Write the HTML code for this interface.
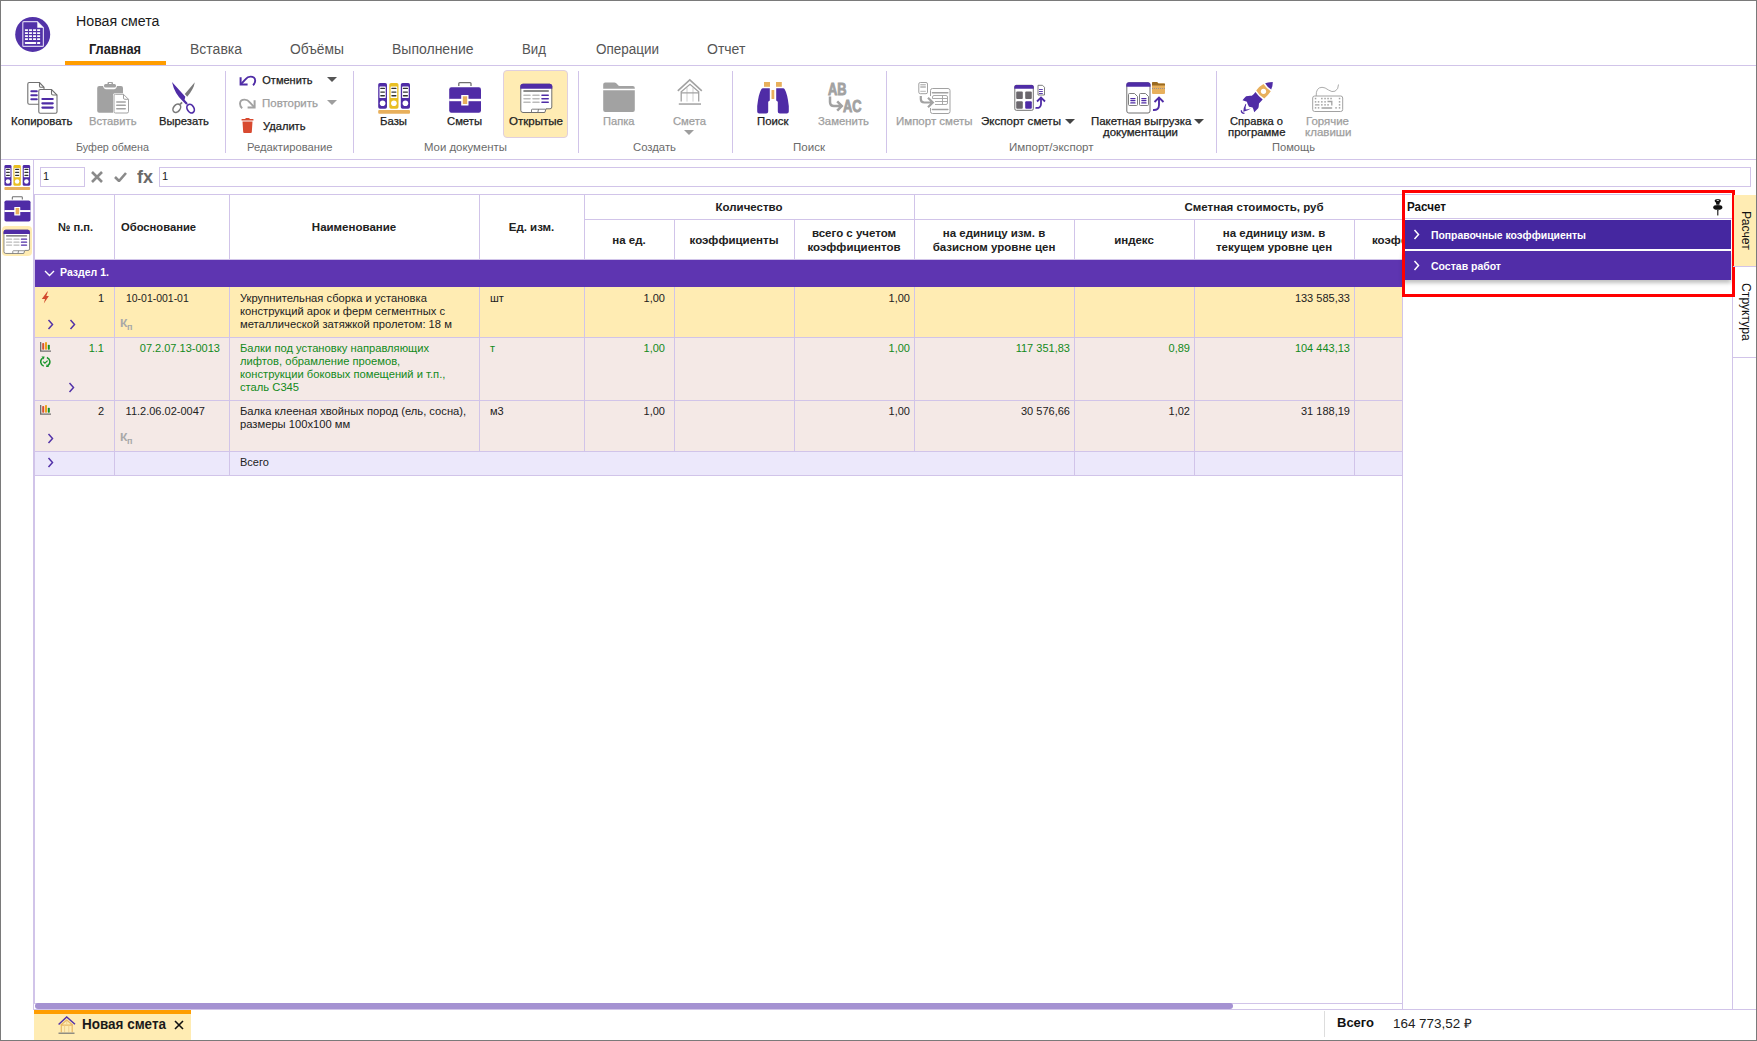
<!DOCTYPE html>
<html><head><meta charset="utf-8"><style>
html,body{margin:0;padding:0;}
body{width:1757px;height:1041px;overflow:hidden;position:relative;background:#fff;font-family:"Liberation Sans",sans-serif;}
.t{position:absolute;white-space:nowrap;line-height:1;transform-origin:0 0;}
.r{position:absolute;display:block;}
#frame{position:absolute;left:0;top:0;width:1757px;height:1041px;box-sizing:border-box;border:1px solid #7a7a7a;pointer-events:none;}
</style></head><body>
<div class="r" style="left:0px;top:0px;width:1757px;height:1041px;background:#fff;"></div>
<svg class="r" style="left:15px;top:16px" width="36" height="36" viewBox="0 0 36 36"><circle cx="17.7" cy="18.4" r="17.5" fill="#5232a8"/><path d="M8.8 5.7H22.3L28.4 11.8V29.4Q28.4 30.4 27.4 30.4H8.8Q7.8 30.4 7.8 29.4V6.7Q7.8 5.7 8.8 5.7Z" fill="none" stroke="#d6cdee" stroke-width="1.2"/><path d="M22.3 5.7V11.8H28.4Z" fill="#fff"/><rect x="9.9" y="13.2" width="3.1" height="1.7" rx="0.4" fill="#fff"/><rect x="13.95" y="13.2" width="3.1" height="1.7" rx="0.4" fill="#fff"/><rect x="18.0" y="13.2" width="3.1" height="1.7" rx="0.4" fill="#fff"/><rect x="22.049999999999997" y="13.2" width="3.1" height="1.7" rx="0.4" fill="#fff"/><rect x="9.9" y="16.2" width="3.1" height="1.7" rx="0.4" fill="#fff"/><rect x="13.95" y="16.2" width="3.1" height="1.7" rx="0.4" fill="#fff"/><rect x="18.0" y="16.2" width="3.1" height="1.7" rx="0.4" fill="#fff"/><rect x="22.049999999999997" y="16.2" width="3.1" height="1.7" rx="0.4" fill="#fff"/><rect x="9.9" y="19.2" width="3.1" height="1.7" rx="0.4" fill="#fff"/><rect x="13.95" y="19.2" width="3.1" height="1.7" rx="0.4" fill="#fff"/><rect x="18.0" y="19.2" width="3.1" height="1.7" rx="0.4" fill="#fff"/><rect x="22.049999999999997" y="19.2" width="3.1" height="1.7" rx="0.4" fill="#fff"/><rect x="9.9" y="22.2" width="3.1" height="1.7" rx="0.4" fill="#fff"/><rect x="13.95" y="22.2" width="3.1" height="1.7" rx="0.4" fill="#fff"/><rect x="18.0" y="22.2" width="3.1" height="1.7" rx="0.4" fill="#fff"/><rect x="22.049999999999997" y="22.2" width="3.1" height="1.7" rx="0.4" fill="#fff"/><rect x="9.9" y="26.1" width="11.2" height="1.9" rx="0.4" fill="#fff"/><rect x="22.05" y="26.1" width="3.1" height="1.9" rx="0.4" fill="#fff"/></svg>
<div class="t" style="left:75.5px;top:14.10px;font-size:14px;color:#1a1a1a;transform:scaleX(1.013);">Новая смета</div>
<div class="t" style="left:89px;top:42.10px;font-size:14px;color:#212121;font-weight:bold;transform:scaleX(0.914);">Главная</div>
<div class="t" style="left:190px;top:42.10px;font-size:14px;color:#555;">Вставка</div>
<div class="t" style="left:290px;top:42.10px;font-size:14px;color:#555;transform:scaleX(0.988);">Объёмы</div>
<div class="t" style="left:392px;top:42.10px;font-size:14px;color:#555;">Выполнение</div>
<div class="t" style="left:522px;top:42.10px;font-size:14px;color:#555;transform:scaleX(0.947);">Вид</div>
<div class="t" style="left:596px;top:42.10px;font-size:14px;color:#555;transform:scaleX(0.962);">Операции</div>
<div class="t" style="left:707px;top:42.10px;font-size:14px;color:#555;">Отчет</div>
<div class="r" style="left:65px;top:61px;width:101px;height:4px;background:#ff9d00;"></div>
<div class="r" style="left:1px;top:65px;width:1755px;height:1px;background:#d1c4e9;"></div>
<div class="r" style="left:225px;top:71px;width:1px;height:82px;background:#d1c4e9;"></div>
<div class="r" style="left:353px;top:71px;width:1px;height:82px;background:#d1c4e9;"></div>
<div class="r" style="left:578px;top:71px;width:1px;height:82px;background:#d1c4e9;"></div>
<div class="r" style="left:732px;top:71px;width:1px;height:82px;background:#d1c4e9;"></div>
<div class="r" style="left:886px;top:71px;width:1px;height:82px;background:#d1c4e9;"></div>
<div class="r" style="left:1216px;top:71px;width:1px;height:82px;background:#d1c4e9;"></div>
<div class="t" style="left:76px;top:141.65px;font-size:11px;color:#6b6b6b;transform:scaleX(0.976);">Буфер обмена</div>
<div class="t" style="left:246.5px;top:141.65px;font-size:11px;color:#6b6b6b;transform:scaleX(1.020);">Редактирование</div>
<div class="t" style="left:424px;top:141.65px;font-size:11px;color:#6b6b6b;transform:scaleX(1.035);">Мои документы</div>
<div class="t" style="left:633px;top:141.65px;font-size:11px;color:#6b6b6b;transform:scaleX(1.028);">Создать</div>
<div class="t" style="left:793px;top:141.65px;font-size:11px;color:#6b6b6b;transform:scaleX(1.050);">Поиск</div>
<div class="t" style="left:1008.5px;top:141.65px;font-size:11px;color:#6b6b6b;transform:scaleX(1.049);">Импорт/экспорт</div>
<div class="t" style="left:1271.5px;top:141.65px;font-size:11px;color:#6b6b6b;transform:scaleX(1.012);">Помощь</div>
<div class="r" style="left:503px;top:70px;width:65px;height:68px;background:#ffecb3;border-radius:4px;box-sizing:border-box;border:1px solid #dfcfe0;"></div>
<div class="t" style="left:10.5px;top:115.65px;font-size:11px;color:#212121;transform:scaleX(1.038);-webkit-text-stroke:0.25px #212121;">Копировать</div>
<div class="t" style="left:88.5px;top:115.65px;font-size:11px;color:#9e9e9e;transform:scaleX(1.019);-webkit-text-stroke:0.25px #9e9e9e;">Вставить</div>
<div class="t" style="left:158.5px;top:115.65px;font-size:11px;color:#212121;transform:scaleX(1.021);-webkit-text-stroke:0.25px #212121;">Вырезать</div>
<div class="t" style="left:380px;top:115.65px;font-size:11px;color:#212121;transform:scaleX(1.032);-webkit-text-stroke:0.25px #212121;">Базы</div>
<div class="t" style="left:447px;top:115.65px;font-size:11px;color:#212121;transform:scaleX(1.023);-webkit-text-stroke:0.25px #212121;">Сметы</div>
<div class="t" style="left:508.5px;top:115.65px;font-size:11px;color:#212121;transform:scaleX(1.049);-webkit-text-stroke:0.25px #212121;">Открытые</div>
<div class="t" style="left:602.5px;top:115.65px;font-size:11px;color:#9e9e9e;transform:scaleX(1.011);-webkit-text-stroke:0.25px #9e9e9e;">Папка</div>
<div class="t" style="left:673px;top:115.65px;font-size:11px;color:#9e9e9e;transform:scaleX(1.022);-webkit-text-stroke:0.25px #9e9e9e;">Смета</div>
<div class="t" style="left:756.5px;top:115.65px;font-size:11px;color:#212121;transform:scaleX(1.033);-webkit-text-stroke:0.25px #212121;">Поиск</div>
<div class="t" style="left:818px;top:115.65px;font-size:11px;color:#9e9e9e;transform:scaleX(1.032);-webkit-text-stroke:0.25px #9e9e9e;">Заменить</div>
<div class="t" style="left:895.5px;top:115.65px;font-size:11px;color:#9e9e9e;transform:scaleX(1.044);-webkit-text-stroke:0.25px #9e9e9e;">Импорт сметы</div>
<div class="t" style="left:981px;top:115.65px;font-size:11px;color:#212121;transform:scaleX(1.050);-webkit-text-stroke:0.25px #212121;">Экспорт сметы</div>
<div class="t" style="left:1090.5px;top:115.65px;font-size:11px;color:#212121;transform:scaleX(1.042);-webkit-text-stroke:0.25px #212121;">Пакетная выгрузка</div>
<div class="t" style="left:1103px;top:126.65px;font-size:11px;color:#212121;transform:scaleX(1.038);-webkit-text-stroke:0.25px #212121;">документации</div>
<div class="t" style="left:1230px;top:115.65px;font-size:11px;color:#212121;transform:scaleX(1.013);-webkit-text-stroke:0.25px #212121;">Справка о</div>
<div class="t" style="left:1227.5px;top:126.65px;font-size:11px;color:#212121;transform:scaleX(1.032);-webkit-text-stroke:0.25px #212121;">программе</div>
<div class="t" style="left:1306px;top:115.65px;font-size:11px;color:#9e9e9e;transform:scaleX(1.041);-webkit-text-stroke:0.25px #9e9e9e;">Горячие</div>
<div class="t" style="left:1304.5px;top:126.65px;font-size:11px;color:#9e9e9e;transform:scaleX(1.046);-webkit-text-stroke:0.25px #9e9e9e;">клавиши</div>
<div class="t" style="left:262.3px;top:74.65px;font-size:11px;color:#212121;-webkit-text-stroke:0.25px #212121;">Отменить</div>
<div class="t" style="left:262px;top:97.65px;font-size:11px;color:#9e9e9e;transform:scaleX(1.043);-webkit-text-stroke:0.25px #9e9e9e;">Повторить</div>
<div class="t" style="left:262.5px;top:120.65px;font-size:11px;color:#212121;transform:scaleX(1.012);-webkit-text-stroke:0.25px #212121;">Удалить</div>
<svg class="r" style="left:327px;top:77px" width="10" height="5" viewBox="0 0 10 5"><path d="M0 0H10L5.0 5z" fill="#555"/></svg>
<svg class="r" style="left:327px;top:100px" width="10" height="5" viewBox="0 0 10 5"><path d="M0 0H10L5.0 5z" fill="#9e9e9e"/></svg>
<svg class="r" style="left:684px;top:130px" width="10" height="5" viewBox="0 0 10 5"><path d="M0 0H10L5.0 5z" fill="#9e9e9e"/></svg>
<svg class="r" style="left:1065px;top:119px" width="10" height="5" viewBox="0 0 10 5"><path d="M0 0H10L5.0 5z" fill="#444"/></svg>
<svg class="r" style="left:1194px;top:119px" width="10" height="5" viewBox="0 0 10 5"><path d="M0 0H10L5.0 5z" fill="#444"/></svg>
<svg class="r" style="left:22px;top:78px" width="40.00" height="40.00" viewBox="0 0 40 40"><path d="M5.8 6Q5.8 4.5 7.3 4.5H17.5L22 9.3V24.8Q22 26.3 20.5 26.3H7.3Q5.8 26.3 5.8 24.8Z" fill="#fff" stroke="#707070" stroke-width="1.1"/><path d="M17.5 4.5V8Q17.5 9.3 18.8 9.3H22" fill="none" stroke="#707070" stroke-width="1.1"/><rect x="8.3" y="12.2" width="7.5" height="2" rx="1" fill="#4f2ca6"/><rect x="8.3" y="16.2" width="7.5" height="2" rx="1" fill="#4f2ca6"/><rect x="8.3" y="20.2" width="7.5" height="2" rx="1" fill="#4f2ca6"/><path d="M16.8 13Q16.8 11.5 18.3 11.5H29.5L35 17V33.8Q35 35.3 33.5 35.3H18.3Q16.8 35.3 16.8 33.8Z" fill="#fff" stroke="#707070" stroke-width="1.1"/><path d="M29.5 11.5V15.5Q29.5 17 31 17H35" fill="none" stroke="#707070" stroke-width="1.1"/><rect x="19.3" y="19.9" width="12.5" height="2.2" rx="1.1" fill="#4f2ca6"/><rect x="19.3" y="24.2" width="12.5" height="2.2" rx="1.1" fill="#4f2ca6"/><rect x="19.3" y="28.5" width="12.5" height="2.2" rx="1.1" fill="#4f2ca6"/></svg>
<svg class="r" style="left:92px;top:78px" width="40.00" height="40.00" viewBox="0 0 40 40"><path d="M7.2 8H11Q12 11.3 14 11.3H22Q24 11.3 25 8H29Q31 8 31 10V32.8Q31 34.8 29 34.8H7.2Q5.2 34.8 5.2 32.8V10Q5.2 8 7.2 8Z" fill="#a2a2a2"/><rect x="12" y="6" width="12" height="3.6" rx="1.5" fill="#a2a2a2"/><rect x="15.5" y="4" width="5.5" height="3" rx="1" fill="#a2a2a2"/><rect x="17" y="5" width="2.5" height="1" fill="#fff"/><path d="M23 15.3H31.8L37.5 21V34Q37.5 36 35.5 36H23Q21 36 21 34V17.3Q21 15.3 23 15.3Z" fill="#fff"/><path d="M23.5 16.3H31.5L36.5 21.3V33.5Q36.5 35 35 35H23.5Q22 35 22 33.5V17.8Q22 16.3 23.5 16.3Z" fill="#fff" stroke="#a2a2a2" stroke-width="1"/><path d="M31.5 16.3V20Q31.5 21.3 32.8 21.3H36.5" fill="none" stroke="#a2a2a2" stroke-width="1"/><rect x="24" y="23.2" width="10" height="1.6" rx="0.8" fill="#a2a2a2"/><rect x="24" y="26.5" width="10" height="1.6" rx="0.8" fill="#a2a2a2"/><rect x="24" y="29.9" width="10" height="1.6" rx="0.8" fill="#a2a2a2"/></svg>
<svg class="r" style="left:163px;top:78px" width="40.00" height="40.00" viewBox="0 0 40 40"><path d="M9 4L22.3 18.8L21.6 21.8L24.8 25.3L23.2 26.8L19.6 23Q11.5 15.5 9 4Z" fill="#4f2ca6"/><ellipse cx="27.6" cy="30.6" rx="3.3" ry="4.6" transform="rotate(-32 27.6 30.6)" fill="none" stroke="#4f2ca6" stroke-width="1.7"/><path d="M31.8 4.2Q31 10.5 24.2 18.8L21.8 16Z" fill="#7a7a7a"/><ellipse cx="13.8" cy="30.2" rx="3.3" ry="4.6" transform="rotate(38 13.8 30.2)" fill="none" stroke="#7a7a7a" stroke-width="1.6"/><path d="M17 26.5L19 24.3" stroke="#7a7a7a" stroke-width="1.8"/></svg>
<svg class="r" style="left:374px;top:78px" width="40.00" height="40.00" viewBox="0 0 40 40"><rect x="4.2" y="5" width="8.8" height="25.7" rx="1.8" fill="#4f2ca6"/><rect x="5.5" y="8.5" width="6.200000000000001" height="11.5" rx="0.5" fill="#fff"/><rect x="6.2" y="9.700000000000001" width="4.800000000000001" height="1.3" rx="0.6" fill="#333"/><rect x="6.2" y="13.4" width="4.800000000000001" height="1.3" rx="0.6" fill="#333"/><rect x="6.2" y="17.099999999999998" width="4.800000000000001" height="1.3" rx="0.6" fill="#333"/><circle cx="8.6" cy="25.3" r="2.8" fill="#fff"/><rect x="15.3" y="5" width="9.2" height="25.7" rx="1.8" fill="#e9bf22"/><rect x="16.6" y="8.5" width="6.6" height="11.5" rx="0.5" fill="#fff"/><rect x="17.3" y="9.700000000000001" width="5.199999999999999" height="1.3" rx="0.6" fill="#333"/><rect x="17.3" y="13.4" width="5.199999999999999" height="1.3" rx="0.6" fill="#333"/><rect x="17.3" y="17.099999999999998" width="5.199999999999999" height="1.3" rx="0.6" fill="#333"/><circle cx="19.9" cy="25.3" r="2.8" fill="#fff"/><rect x="26.8" y="5" width="9.2" height="25.7" rx="1.8" fill="#4f2ca6"/><rect x="28.1" y="8.5" width="6.6" height="11.5" rx="0.5" fill="#fff"/><rect x="28.8" y="9.700000000000001" width="5.199999999999999" height="1.3" rx="0.6" fill="#333"/><rect x="28.8" y="13.4" width="5.199999999999999" height="1.3" rx="0.6" fill="#333"/><rect x="28.8" y="17.099999999999998" width="5.199999999999999" height="1.3" rx="0.6" fill="#333"/><circle cx="31.4" cy="25.3" r="2.8" fill="#fff"/><rect x="4.2" y="32" width="31.8" height="3.8" rx="1" fill="#e8b05c"/></svg>
<svg class="r" style="left:445px;top:78px" width="40.00" height="40.00" viewBox="0 0 40 40"><path d="M13.8 8V5.6Q13.8 4.6 14.8 4.6H25Q26 4.6 26 5.6V8" fill="none" stroke="#707070" stroke-width="1.3"/><rect x="4.2" y="9.2" width="31.8" height="25.5" rx="2.2" fill="#4f2ca6"/><rect x="4.2" y="20.8" width="31.8" height="2.4" fill="#fff"/><rect x="16.2" y="17" width="7.3" height="10.5" rx="0.5" fill="#fff"/><rect x="17.8" y="18.3" width="4.4" height="7.7" fill="#e8b05c"/></svg>
<svg class="r" style="left:516px;top:78px" width="40.00" height="40.00" viewBox="0 0 40 40"><path d="M4.8 8.5Q4.8 6.2 7 6.2H33.6Q35.8 6.2 35.8 8.5V29Q35.8 30.8 34 30.8H30L28.8 34.5H7Q4.8 34.5 4.8 32.3Z" fill="#fff" stroke="#707070" stroke-width="1"/><path d="M4.3 8.5Q4.3 5.8 7 5.8H33.6Q36.3 5.8 36.3 8.5V10.8H4.3Z" fill="#4f2ca6"/><rect x="7.2" y="12.3" width="25.8" height="1.5" rx="0.75" fill="#666"/><rect x="7.2" y="16.4" width="7.6" height="1.6" rx="0.8" fill="#bbb"/><rect x="16.2" y="16.4" width="7.6" height="1.6" rx="0.8" fill="#bbb"/><rect x="25.2" y="16.4" width="7.8" height="1.6" rx="0.8" fill="#4f2ca6"/><rect x="7.2" y="20.0" width="7.6" height="1.6" rx="0.8" fill="#bbb"/><rect x="16.2" y="20.0" width="7.6" height="1.6" rx="0.8" fill="#bbb"/><rect x="25.2" y="20.0" width="7.8" height="1.6" rx="0.8" fill="#4f2ca6"/><rect x="7.2" y="23.5" width="7.6" height="1.6" rx="0.8" fill="#bbb"/><rect x="16.2" y="23.5" width="7.6" height="1.6" rx="0.8" fill="#bbb"/><rect x="25.2" y="23.5" width="7.8" height="1.6" rx="0.8" fill="#4f2ca6"/><path d="M15.5 34.5V32Q15.5 31.2 16.3 31.2H29.5M22.5 31.2L21.8 34.5" fill="none" stroke="#707070" stroke-width="0.9"/></svg>
<svg class="r" style="left:598px;top:74px" width="40.00" height="40.00" viewBox="0 0 40 40"><path d="M5.2 14.7V10.5Q5.2 8.5 7.2 8.5H16.5Q18 8.5 19.5 10.5Q20.5 12 22 12H34.8Q36.8 12 36.8 14V14.7Z" fill="#a2a2a2"/><path d="M5.2 16.3H36.8V36Q36.8 38 34.8 38H7.2Q5.2 38 5.2 36Z" fill="#a2a2a2"/></svg>
<svg class="r" style="left:670px;top:74px" width="40.00" height="40.00" viewBox="0 0 40 40"><path d="M7.8 16.8L19.8 5.8L31.8 16.8" fill="none" stroke="#a2a2a2" stroke-width="1.6"/><path d="M17 13.5V27.6M23 13.5V27.6" stroke="#cfcfcf" stroke-width="1"/><path d="M11.2 27.6V17.8L20 10.3L28.7 17.8V27.6M11.2 18.8H28.7" fill="none" stroke="#a2a2a2" stroke-width="1.3"/><rect x="8.8" y="29.3" width="22.2" height="1.5" fill="#a2a2a2"/></svg>
<svg class="r" style="left:752px;top:78px" width="40.00" height="40.00" viewBox="0 0 40 40"><rect x="12" y="4" width="6" height="4.8" fill="#e8b05c"/><rect x="24" y="4" width="5.8" height="4.8" fill="#e8b05c"/><rect x="19.5" y="12" width="2.8" height="9" rx="0.5" fill="#e8b05c"/><path d="M11 10.2H17.8V22.5L16.2 23.8V33.5Q16.2 35.5 14.2 35.5H7.2Q5.2 35.5 5.2 33.5V28Q6.5 16 9.2 11.5Q9.8 10.2 11 10.2Z" fill="#4f2ca6"/><path d="M31 10.2H24.2V22.5L25.8 23.8V33.5Q25.8 35.5 27.8 35.5H34.8Q36.8 35.5 36.8 33.5V28Q35.5 16 32.8 11.5Q32.2 10.2 31 10.2Z" fill="#4f2ca6"/></svg>
<svg class="r" style="left:823px;top:78px" width="40.00" height="40.00" viewBox="0 0 40 40"><text x="5" y="16.8" font-family="Liberation Sans" font-weight="bold" font-size="16.5" fill="#a2a2a2" stroke="#a2a2a2" stroke-width="0.9" transform="translate(5 0) scale(0.78 1) translate(-5 0)">AB</text><text x="20" y="33.7" font-family="Liberation Sans" font-weight="bold" font-size="16.5" fill="#a2a2a2" stroke="#a2a2a2" stroke-width="0.9" transform="translate(20 0) scale(0.78 1) translate(-20 0)">AC</text><path d="M7 18.5V24Q7 28 11 28H18.5M14.2 23.3L18.8 28L14.2 32.7" fill="none" stroke="#a2a2a2" stroke-width="2.5"/></svg>
<svg class="r" style="left:914px;top:78px" width="40.00" height="40.00" viewBox="0 0 40 40"><rect x="4.8" y="4.5" width="8.7" height="11.2" rx="1.5" fill="none" stroke="#a2a2a2" stroke-width="1"/><path d="M6.3 6.6H11.8M6.3 8.2H11.8M6.3 9.3H11.8M6.3 13.3H11.8" stroke="#a2a2a2" stroke-width="0.8"/><path d="M16.5 18V12.5Q16.5 10.5 18.5 10.5H34Q36 10.5 36 12.5V33.5Q36 35.5 34 35.5H18.5Q16.5 35.5 16.5 33.5V30" fill="none" stroke="#a2a2a2" stroke-width="1"/><path d="M18.5 14.7H33.8M18.5 31.5H33.8" stroke="#a2a2a2" stroke-width="1.6" stroke-linecap="round"/><path d="M21 26.5H32Q33.5 26.5 33.5 25V19Q33.5 17.5 32 17.5H20Q18.5 17.5 18.5 19V20.5H33.5M21 23.5H33.5M28.5 17.5V26.5" fill="none" stroke="#a2a2a2" stroke-width="0.9"/><path d="M6.8 18V21Q6.8 24.5 10.3 24.5H18.5M14 19.8L18.8 24.5L14 29.2" fill="none" stroke="#a2a2a2" stroke-width="2.2"/></svg>
<svg class="r" style="left:1010px;top:78px" width="40.00" height="40.00" viewBox="0 0 40 40"><rect x="4.8" y="7.3" width="18.5" height="25" rx="1.5" fill="#fff" stroke="#707070" stroke-width="1"/><path d="M4.3 9Q4.3 7 6.3 7H21.8Q23.8 7 23.8 9V10.8H4.3Z" fill="#4f2ca6"/><rect x="6.2" y="13.5" width="6.6" height="7.5" rx="1" fill="#6b676d"/><rect x="15.2" y="13.5" width="6.6" height="7.5" rx="1" fill="#6b676d"/><rect x="6.2" y="23.3" width="6.6" height="7.4" rx="1" fill="#6b676d"/><rect x="15.2" y="23.3" width="6.6" height="7.4" rx="1" fill="#4f2ca6"/><path d="M28 7.3H32.5L34.5 9.3V17H28Z" fill="#fff" stroke="#707070" stroke-width="0.9"/><path d="M29 11.5H32.8M29 13.5H32.8M29 15.5H32.8" stroke="#4f2ca6" stroke-width="0.9"/><path d="M25.5 29.8Q31 30.5 31 26V20M27 23.5L31 19.5L35 23.5" fill="none" stroke="#4f2ca6" stroke-width="1.8"/></svg>
<svg class="r" style="left:1122px;top:78px" width="48.00" height="40.00" viewBox="0 0 48 40"><rect x="4.8" y="4.8" width="23.2" height="30.2" rx="2" fill="#fff" stroke="#707070" stroke-width="1"/><path d="M4.3 7Q4.3 4.3 7 4.3H25.8Q28.5 4.3 28.5 7V8.8H4.3Z" fill="#4f2ca6"/><path d="M7.5 15.5H12.5L15.5 18.5V26.5Q15.5 27.5 14.5 27.5H7.5Q6.5 27.5 6.5 26.5V16.5Q6.5 15.5 7.5 15.5Z" fill="#fff" stroke="#707070" stroke-width="0.9"/><rect x="8.2" y="19.9" width="5.4" height="1.3" rx="0.6" fill="#4f2ca6"/><rect x="8.2" y="21.9" width="5.4" height="1.3" rx="0.6" fill="#4f2ca6"/><rect x="8.2" y="24.2" width="5.4" height="1.3" rx="0.6" fill="#4f2ca6"/><path d="M18.5 15.5H23.5L26.5 18.5V26.5Q26.5 27.5 25.5 27.5H18.5Q17.5 27.5 17.5 26.5V16.5Q17.5 15.5 18.5 15.5Z" fill="#fff" stroke="#707070" stroke-width="0.9"/><rect x="19.2" y="19.9" width="5.4" height="1.3" rx="0.6" fill="#4f2ca6"/><rect x="19.2" y="21.9" width="5.4" height="1.3" rx="0.6" fill="#4f2ca6"/><rect x="19.2" y="24.2" width="5.4" height="1.3" rx="0.6" fill="#4f2ca6"/><path d="M30 5.5Q30 4 31.5 4H35L36.5 5.5H42Q43 5.5 43 6.5V15Q43 16 42 16H31Q30 16 30 15Z" fill="#e8b05c"/><path d="M30 4.8Q30 4 31 4H35L36.5 5.5H42.5Q43 5.5 43 6.3V7.5H30Z" fill="#9a6a20"/><path d="M30 10.5H43" stroke="#8a8a9a" stroke-width="0.8" stroke-dasharray="1 1"/><path d="M31 32Q37 32.5 37 27V20M32.5 24L37 19.5L41.5 24" fill="none" stroke="#4f2ca6" stroke-width="1.9"/></svg>
<svg class="r" style="left:1237px;top:78px" width="40.00" height="40.00" viewBox="0 0 40 40"><path d="M28.1 5.3Q31 4.3 35.8 4.05Q35.8 8.5 34.2 11.5Q30.5 9.5 28.1 5.3Z" fill="#4f2ca6"/><path d="M19.2 12.5Q22 8.5 26.5 6.1Q29.5 10.5 33.8 13.3Q31 17.5 27.3 20.6Q22.5 18 19.2 12.5Z" fill="#e8b05c"/><circle cx="26.5" cy="13.3" r="2.6" fill="#fff"/><path d="M18.4 14.1Q21.5 18.5 25.7 21.4L22 25.4Q21.8 29 21.2 30.3L17.2 34.3Q16.5 31 15.6 29.5Q13 29 12 28.7Q10.5 26.5 9.9 23.8L5.5 22.2Q7.5 19.5 9.1 18.2Q12 17.5 14.8 17.8Q17 16.5 18.4 14.1Z" fill="#4f2ca6"/><path d="M8.6 25.8Q6.2 30 6.3 33.7Q10.2 33 14 30.6Q10.5 31.4 8.7 31.6Q8.4 28.8 9.2 26.2Z" fill="#4f2ca6"/><path d="M4.4 32.2Q4.1 35 7.5 35.4" fill="none" stroke="#4f2ca6" stroke-width="1.3"/></svg>
<svg class="r" style="left:1307px;top:78px" width="40.00" height="40.00" viewBox="0 0 40 40"><rect x="5.7" y="18" width="30" height="15.5" rx="2" fill="none" stroke="#a2a2a2" stroke-width="1"/><path d="M9.2 18Q8.8 9.5 15 9.3Q18 9.3 21.5 12Q25 14.5 28 13.2Q31.5 11.5 31.5 6.5" fill="none" stroke="#a2a2a2" stroke-width="0.9"/><rect x="7.8" y="19.8" width="1.5" height="1.5" fill="#a2a2a2"/><rect x="14.100000000000001" y="19.8" width="1.5" height="1.5" fill="#a2a2a2"/><rect x="17.3" y="19.8" width="1.5" height="1.5" fill="#a2a2a2"/><rect x="20.3" y="19.8" width="1.5" height="1.5" fill="#a2a2a2"/><rect x="23.3" y="19.8" width="1.5" height="1.5" fill="#a2a2a2"/><rect x="31.8" y="19.8" width="1.5" height="1.5" fill="#a2a2a2"/><rect x="7.8" y="23.1" width="1.5" height="1.5" fill="#a2a2a2"/><rect x="10.8" y="23.1" width="1.5" height="1.5" fill="#a2a2a2"/><rect x="14.100000000000001" y="23.1" width="1.5" height="1.5" fill="#a2a2a2"/><rect x="17.3" y="23.1" width="1.5" height="1.5" fill="#a2a2a2"/><rect x="31.8" y="23.1" width="1.5" height="1.5" fill="#a2a2a2"/><rect x="14.100000000000001" y="26.1" width="1.5" height="1.5" fill="#a2a2a2"/><rect x="17.3" y="26.1" width="1.5" height="1.5" fill="#a2a2a2"/><rect x="20.3" y="26.1" width="1.5" height="1.5" fill="#a2a2a2"/><rect x="31.8" y="26.1" width="1.5" height="1.5" fill="#a2a2a2"/><rect x="7.8" y="29.1" width="1.5" height="1.5" fill="#a2a2a2"/><rect x="10.8" y="29.1" width="1.5" height="1.5" fill="#a2a2a2"/><rect x="28.3" y="29.1" width="1.5" height="1.5" fill="#a2a2a2"/><rect x="31.8" y="29.1" width="1.5" height="1.5" fill="#a2a2a2"/><rect x="7.8" y="26.2" width="4.8" height="1.4" rx="0.7" fill="#a2a2a2"/><rect x="14.3" y="29.2" width="11" height="1.5" rx="0.7" fill="#a2a2a2"/><path d="M20.5 23.5H24.8V27.5" fill="none" stroke="#a2a2a2" stroke-width="1.3"/></svg>
<svg class="r" style="left:239px;top:73px" width="18.00" height="14.00" viewBox="0 0 18 14"><path d="M1.6 4.3V11.6H8.6" fill="none" stroke="#4f2ca6" stroke-width="2"/><path d="M2 11.2L6.4 6.4Q8.6 3.6 11.6 3.6Q16.2 3.6 16.2 7.8Q16.2 10.4 14 12.2" fill="none" stroke="#4f2ca6" stroke-width="1.9"/></svg>
<svg class="r" style="left:239px;top:96px" width="18.00" height="14.00" viewBox="0 0 18 14"><path d="M15.6 4.3V11.6H8.6" fill="none" stroke="#a2a2a2" stroke-width="2"/><path d="M15.2 11.2L10.8 6.4Q8.6 3.6 5.6 3.6Q1 3.6 1 7.8Q1 10.4 3.2 12.2" fill="none" stroke="#a2a2a2" stroke-width="1.9"/></svg>
<svg class="r" style="left:241px;top:118px" width="13.00" height="16.00" viewBox="0 0 13 16"><rect x="0.5" y="1" width="12" height="1.6" rx="0.5" fill="#d84a30"/><rect x="4.5" y="0" width="4" height="1.5" fill="#d84a30"/><path d="M1.5 3.5H11.5L10.8 14Q10.8 15 9.8 15H3.2Q2.2 15 2.2 14Z" fill="#d84a30"/></svg>
<svg class="r" style="left:0.6px;top:161px" width="32.40" height="32.40" viewBox="0 0 40 40"><rect x="4.2" y="5" width="8.8" height="25.7" rx="1.8" fill="#4f2ca6"/><rect x="5.5" y="8.5" width="6.200000000000001" height="11.5" rx="0.5" fill="#fff"/><rect x="6.2" y="9.700000000000001" width="4.800000000000001" height="1.3" rx="0.6" fill="#333"/><rect x="6.2" y="13.4" width="4.800000000000001" height="1.3" rx="0.6" fill="#333"/><rect x="6.2" y="17.099999999999998" width="4.800000000000001" height="1.3" rx="0.6" fill="#333"/><circle cx="8.6" cy="25.3" r="2.8" fill="#fff"/><rect x="15.3" y="5" width="9.2" height="25.7" rx="1.8" fill="#e9bf22"/><rect x="16.6" y="8.5" width="6.6" height="11.5" rx="0.5" fill="#fff"/><rect x="17.3" y="9.700000000000001" width="5.199999999999999" height="1.3" rx="0.6" fill="#333"/><rect x="17.3" y="13.4" width="5.199999999999999" height="1.3" rx="0.6" fill="#333"/><rect x="17.3" y="17.099999999999998" width="5.199999999999999" height="1.3" rx="0.6" fill="#333"/><circle cx="19.9" cy="25.3" r="2.8" fill="#fff"/><rect x="26.8" y="5" width="9.2" height="25.7" rx="1.8" fill="#4f2ca6"/><rect x="28.1" y="8.5" width="6.6" height="11.5" rx="0.5" fill="#fff"/><rect x="28.8" y="9.700000000000001" width="5.199999999999999" height="1.3" rx="0.6" fill="#333"/><rect x="28.8" y="13.4" width="5.199999999999999" height="1.3" rx="0.6" fill="#333"/><rect x="28.8" y="17.099999999999998" width="5.199999999999999" height="1.3" rx="0.6" fill="#333"/><circle cx="31.4" cy="25.3" r="2.8" fill="#fff"/><rect x="4.2" y="32" width="31.8" height="3.8" rx="1" fill="#e8b05c"/></svg>
<svg class="r" style="left:0.55px;top:193px" width="32.80" height="32.80" viewBox="0 0 40 40"><path d="M13.8 8V5.6Q13.8 4.6 14.8 4.6H25Q26 4.6 26 5.6V8" fill="none" stroke="#707070" stroke-width="1.3"/><rect x="4.2" y="9.2" width="31.8" height="25.5" rx="2.2" fill="#4f2ca6"/><rect x="4.2" y="20.8" width="31.8" height="2.4" fill="#fff"/><rect x="16.2" y="17" width="7.3" height="10.5" rx="0.5" fill="#fff"/><rect x="17.8" y="18.3" width="4.4" height="7.7" fill="#e8b05c"/></svg>
<div class="r" style="left:2px;top:226px;width:30px;height:30px;background:#ffecb3;border-radius:4px;"></div>
<svg class="r" style="left:0.45px;top:224.7px" width="33.00" height="33.00" viewBox="0 0 40 40"><path d="M4.8 8.5Q4.8 6.2 7 6.2H33.6Q35.8 6.2 35.8 8.5V29Q35.8 30.8 34 30.8H30L28.8 34.5H7Q4.8 34.5 4.8 32.3Z" fill="#fff" stroke="#707070" stroke-width="1"/><path d="M4.3 8.5Q4.3 5.8 7 5.8H33.6Q36.3 5.8 36.3 8.5V10.8H4.3Z" fill="#4f2ca6"/><rect x="7.2" y="12.3" width="25.8" height="1.5" rx="0.75" fill="#666"/><rect x="7.2" y="16.4" width="7.6" height="1.6" rx="0.8" fill="#bbb"/><rect x="16.2" y="16.4" width="7.6" height="1.6" rx="0.8" fill="#bbb"/><rect x="25.2" y="16.4" width="7.8" height="1.6" rx="0.8" fill="#4f2ca6"/><rect x="7.2" y="20.0" width="7.6" height="1.6" rx="0.8" fill="#bbb"/><rect x="16.2" y="20.0" width="7.6" height="1.6" rx="0.8" fill="#bbb"/><rect x="25.2" y="20.0" width="7.8" height="1.6" rx="0.8" fill="#4f2ca6"/><rect x="7.2" y="23.5" width="7.6" height="1.6" rx="0.8" fill="#bbb"/><rect x="16.2" y="23.5" width="7.6" height="1.6" rx="0.8" fill="#bbb"/><rect x="25.2" y="23.5" width="7.8" height="1.6" rx="0.8" fill="#4f2ca6"/><path d="M15.5 34.5V32Q15.5 31.2 16.3 31.2H29.5M22.5 31.2L21.8 34.5" fill="none" stroke="#707070" stroke-width="0.9"/></svg>
<div class="r" style="left:40px;top:167px;width:45px;height:20px;background:#fff;box-sizing:border-box;border:1px solid #d1c4e9;"></div>
<div class="r" style="left:159px;top:167px;width:1592px;height:20px;background:#fff;box-sizing:border-box;border:1px solid #d1c4e9;"></div>
<div class="t" style="left:43px;top:171.15px;font-size:11px;color:#212121;">1</div>
<div class="t" style="left:162px;top:171.15px;font-size:11px;color:#212121;">1</div>
<svg class="r" style="left:91px;top:171px" width="12" height="12" viewBox="0 0 12 12"><path d="M1 1L11 11M11 1L1 11" stroke="#8a8a8a" stroke-width="2.6"/></svg>
<svg class="r" style="left:114px;top:172px" width="13" height="10" viewBox="0 0 13 10"><path d="M1 5L5 9L12 1" stroke="#8a8a8a" stroke-width="2.6" fill="none"/></svg>
<div class="t" style="left:137px;top:167.15px;font-size:19px;color:#6a6a6a;font-weight:bold;transform:scaleX(0.947);">fx</div>
<div class="r" style="left:0px;top:159px;width:1757px;height:1px;background:#d1c4e9;"></div>
<div class="r" style="left:33px;top:159px;width:1px;height:851px;background:#d1c4e9;"></div>
<div class="r" style="left:34px;top:194px;width:1368px;height:1px;background:#d1c4e9;"></div>
<div class="r" style="left:34px;top:194px;width:1px;height:816px;background:#d1c4e9;"></div>
<div class="r" style="left:35px;top:195px;width:1367px;height:64px;background:#fff;"></div>
<div class="r" style="left:114px;top:195px;width:1px;height:64px;background:#d1c4e9;"></div>
<div class="r" style="left:229px;top:195px;width:1px;height:64px;background:#d1c4e9;"></div>
<div class="r" style="left:479px;top:195px;width:1px;height:64px;background:#d1c4e9;"></div>
<div class="r" style="left:584px;top:195px;width:1px;height:64px;background:#d1c4e9;"></div>
<div class="r" style="left:674px;top:220px;width:1px;height:39px;background:#d1c4e9;"></div>
<div class="r" style="left:794px;top:220px;width:1px;height:39px;background:#d1c4e9;"></div>
<div class="r" style="left:914px;top:195px;width:1px;height:64px;background:#d1c4e9;"></div>
<div class="r" style="left:1074px;top:220px;width:1px;height:39px;background:#d1c4e9;"></div>
<div class="r" style="left:1194px;top:220px;width:1px;height:39px;background:#d1c4e9;"></div>
<div class="r" style="left:1354px;top:220px;width:1px;height:39px;background:#d1c4e9;"></div>
<div class="r" style="left:584px;top:219px;width:818px;height:1px;background:#d1c4e9;"></div>
<div class="r" style="left:34px;top:259px;width:1368px;height:1px;background:#d1c4e9;"></div>
<div class="t" style="left:57.5px;top:221.92px;font-size:11.5px;color:#212121;font-weight:bold;transform:scaleX(0.965);">№ п.п.</div>
<div class="t" style="left:121px;top:221.92px;font-size:11.5px;color:#212121;font-weight:bold;transform:scaleX(0.974);">Обоснование</div>
<div class="t" style="left:311.828125px;top:221.92px;font-size:11.5px;color:#212121;font-weight:bold;">Наименование</div>
<div class="t" style="left:508.734375px;top:221.92px;font-size:11.5px;color:#212121;font-weight:bold;">Ед. изм.</div>
<div class="t" style="left:715.5px;top:201.92px;font-size:11.5px;color:#212121;font-weight:bold;">Количество</div>
<div class="t" style="left:612.296875px;top:235.03px;font-size:11.5px;color:#212121;font-weight:bold;">на ед.</div>
<div class="t" style="left:689.5390625px;top:235.03px;font-size:11.5px;color:#212121;font-weight:bold;">коэффициенты</div>
<div class="t" style="left:811.9296875px;top:227.92px;font-size:11.5px;color:#212121;font-weight:bold;">всего с учетом</div>
<div class="t" style="left:807.484375px;top:241.53px;font-size:11.5px;color:#212121;font-weight:bold;">коэффициентов</div>
<div class="t" style="left:942.8125px;top:227.92px;font-size:11.5px;color:#212121;font-weight:bold;">на единицу изм. в</div>
<div class="t" style="left:932.6875px;top:241.53px;font-size:11.5px;color:#212121;font-weight:bold;">базисном уровне цен</div>
<div class="t" style="left:1114.15625px;top:235.03px;font-size:11.5px;color:#212121;font-weight:bold;">индекс</div>
<div class="t" style="left:1222.8125px;top:227.92px;font-size:11.5px;color:#212121;font-weight:bold;">на единицу изм. в</div>
<div class="t" style="left:1215.9609375px;top:241.53px;font-size:11.5px;color:#212121;font-weight:bold;">текущем уровне цен</div>
<div class="t" style="left:1184.546875px;top:201.92px;font-size:11.5px;color:#212121;font-weight:bold;">Сметная стоимость, руб</div>
<div class="t" style="left:1372px;top:235.03px;font-size:11.5px;color:#212121;font-weight:bold;">коэффициенты</div>
<div class="r" style="left:35px;top:260px;width:1367px;height:27px;background:#5e35b1;"></div>
<svg class="r" style="left:44px;top:270px" width="11" height="7" viewBox="0 0 11 7"><path d="M1 1L5.5 5.4L10 1" stroke="#fff" stroke-width="1.4" fill="none"/></svg>
<div class="t" style="left:60px;top:267.23px;font-size:11.5px;color:#fff;font-weight:bold;transform:scaleX(0.915);">Раздел 1.</div>
<div class="r" style="left:35px;top:287px;width:1367px;height:50px;background:#ffecb3;"></div>
<div class="r" style="left:35px;top:337px;width:1367px;height:1px;background:#d1c4e9;"></div>
<div class="r" style="left:114px;top:287px;width:1px;height:50px;background:#d1c4e9;"></div>
<div class="r" style="left:229px;top:287px;width:1px;height:50px;background:#d1c4e9;"></div>
<div class="r" style="left:479px;top:287px;width:1px;height:50px;background:#d1c4e9;"></div>
<div class="r" style="left:584px;top:287px;width:1px;height:50px;background:#d1c4e9;"></div>
<div class="r" style="left:674px;top:287px;width:1px;height:50px;background:#d1c4e9;"></div>
<div class="r" style="left:794px;top:287px;width:1px;height:50px;background:#d1c4e9;"></div>
<div class="r" style="left:914px;top:287px;width:1px;height:50px;background:#d1c4e9;"></div>
<div class="r" style="left:1074px;top:287px;width:1px;height:50px;background:#d1c4e9;"></div>
<div class="r" style="left:1194px;top:287px;width:1px;height:50px;background:#d1c4e9;"></div>
<div class="r" style="left:1354px;top:287px;width:1px;height:50px;background:#d1c4e9;"></div>
<div class="r" style="left:35px;top:338px;width:1367px;height:62px;background:#f4e9e6;"></div>
<div class="r" style="left:35px;top:400px;width:1367px;height:1px;background:#d1c4e9;"></div>
<div class="r" style="left:114px;top:338px;width:1px;height:62px;background:#d1c4e9;"></div>
<div class="r" style="left:229px;top:338px;width:1px;height:62px;background:#d1c4e9;"></div>
<div class="r" style="left:479px;top:338px;width:1px;height:62px;background:#d1c4e9;"></div>
<div class="r" style="left:584px;top:338px;width:1px;height:62px;background:#d1c4e9;"></div>
<div class="r" style="left:674px;top:338px;width:1px;height:62px;background:#d1c4e9;"></div>
<div class="r" style="left:794px;top:338px;width:1px;height:62px;background:#d1c4e9;"></div>
<div class="r" style="left:914px;top:338px;width:1px;height:62px;background:#d1c4e9;"></div>
<div class="r" style="left:1074px;top:338px;width:1px;height:62px;background:#d1c4e9;"></div>
<div class="r" style="left:1194px;top:338px;width:1px;height:62px;background:#d1c4e9;"></div>
<div class="r" style="left:1354px;top:338px;width:1px;height:62px;background:#d1c4e9;"></div>
<div class="r" style="left:35px;top:401px;width:1367px;height:50px;background:#f4e9e6;"></div>
<div class="r" style="left:35px;top:451px;width:1367px;height:1px;background:#d1c4e9;"></div>
<div class="r" style="left:114px;top:401px;width:1px;height:50px;background:#d1c4e9;"></div>
<div class="r" style="left:229px;top:401px;width:1px;height:50px;background:#d1c4e9;"></div>
<div class="r" style="left:479px;top:401px;width:1px;height:50px;background:#d1c4e9;"></div>
<div class="r" style="left:584px;top:401px;width:1px;height:50px;background:#d1c4e9;"></div>
<div class="r" style="left:674px;top:401px;width:1px;height:50px;background:#d1c4e9;"></div>
<div class="r" style="left:794px;top:401px;width:1px;height:50px;background:#d1c4e9;"></div>
<div class="r" style="left:914px;top:401px;width:1px;height:50px;background:#d1c4e9;"></div>
<div class="r" style="left:1074px;top:401px;width:1px;height:50px;background:#d1c4e9;"></div>
<div class="r" style="left:1194px;top:401px;width:1px;height:50px;background:#d1c4e9;"></div>
<div class="r" style="left:1354px;top:401px;width:1px;height:50px;background:#d1c4e9;"></div>
<div class="r" style="left:35px;top:452px;width:1367px;height:23px;background:#ece8fb;"></div>
<div class="r" style="left:35px;top:475px;width:1367px;height:1px;background:#d1c4e9;"></div>
<div class="r" style="left:114px;top:452px;width:1px;height:23px;background:#d1c4e9;"></div>
<div class="r" style="left:229px;top:452px;width:1px;height:23px;background:#d1c4e9;"></div>
<div class="r" style="left:1074px;top:452px;width:1px;height:23px;background:#d1c4e9;"></div>
<div class="r" style="left:1194px;top:452px;width:1px;height:23px;background:#d1c4e9;"></div>
<div class="r" style="left:1354px;top:452px;width:1px;height:23px;background:#d1c4e9;"></div>
<svg class="r" style="left:36px;top:288px" width="20" height="20" viewBox="0 0 20 20"><path d="M11.3 3.6L5.8 10.9H9L7.8 15.6L12.9 8.1H10.3L11.9 3.6Z" fill="#d24a2e"/></svg>
<div class="t" style="left:97.875px;top:292.65px;font-size:11px;color:#212121;">1</div>
<div class="t" style="left:125.6px;top:292.65px;font-size:11px;color:#212121;transform:scaleX(0.950);">10-01-001-01</div>
<svg class="r" style="left:47px;top:319px" width="7" height="11" viewBox="0 0 7 11"><path d="M1.5 1L5.5 5.5L1.5 10" stroke="#5232a8" stroke-width="1.5" fill="none"/></svg>
<svg class="r" style="left:69px;top:319px" width="7" height="11" viewBox="0 0 7 11"><path d="M1.5 1L5.5 5.5L1.5 10" stroke="#5232a8" stroke-width="1.5" fill="none"/></svg>
<div class="t" style="left:119.5px;top:318.15px;font-size:11px;color:#a8a8a8;font-weight:bold;transform:scaleX(1.116);">К</div>
<div class="t" style="left:127px;top:322.85px;font-size:9px;color:#a8a8a8;font-weight:bold;transform:scaleX(1.011);">п</div>
<div class="t" style="left:240px;top:292.65px;font-size:11px;color:#212121;transform:scaleX(1.018);">Укрупнительная сборка и установка</div>
<div class="t" style="left:240px;top:305.65px;font-size:11px;color:#212121;transform:scaleX(1.018);">конструкций арок и ферм сегментных с</div>
<div class="t" style="left:240px;top:318.65px;font-size:11px;color:#212121;transform:scaleX(1.018);">металлической затяжкой пролетом: 18 м</div>
<div class="t" style="left:490px;top:292.65px;font-size:11px;color:#212121;">шт</div>
<div class="t" style="left:643.5625px;top:292.65px;font-size:11px;color:#212121;">1,00</div>
<div class="t" style="left:888.5625px;top:292.65px;font-size:11px;color:#212121;">1,00</div>
<div class="t" style="left:1294.875px;top:292.65px;font-size:11px;color:#212121;">133 585,33</div>
<svg class="r" style="left:36px;top:338px" width="16" height="16" viewBox="0 0 16 16"><path d="M4.65 4V13.15H15" stroke="#707070" stroke-width="1.3" fill="none"/><rect x="6.2" y="5" width="2" height="6.8" rx="0.8" fill="#d8532e"/><rect x="9" y="4" width="2" height="7.8" rx="0.8" fill="#eba21b"/><rect x="11.8" y="6.8" width="2" height="5" rx="0.8" fill="#168f26"/></svg>
<svg class="r" style="left:40px;top:356px" width="12" height="14" viewBox="0 0 12 14"><path d="M3.73 10.12A4.6 4.6 0 0 1 2.66 2.03" stroke="#17942a" stroke-width="1.5" fill="none"/><path d="M4.6 0.6L1.5 0.5L3.8 3.6Z" fill="#17942a"/><path d="M6.87 1.48A4.6 4.6 0 0 1 7.94 9.57" stroke="#17942a" stroke-width="1.5" fill="none"/><path d="M6 11L9.1 11.1L6.8 8Z" fill="#17942a"/><path d="M3.2 5.6L4.9 7.2L7.6 4.6" stroke="#17942a" stroke-width="1.3" fill="none"/></svg>
<div class="t" style="left:88.6875px;top:342.65px;font-size:11px;color:#128a20;">1.1</div>
<div class="t" style="left:139.78125px;top:342.65px;font-size:11px;color:#128a20;">07.2.07.13-0013</div>
<svg class="r" style="left:68px;top:382px" width="7" height="11" viewBox="0 0 7 11"><path d="M1.5 1L5.5 5.5L1.5 10" stroke="#5232a8" stroke-width="1.5" fill="none"/></svg>
<div class="t" style="left:240px;top:342.65px;font-size:11px;color:#128a20;transform:scaleX(1.018);">Балки под установку направляющих</div>
<div class="t" style="left:240px;top:355.65px;font-size:11px;color:#128a20;transform:scaleX(1.018);">лифтов, обрамление проемов,</div>
<div class="t" style="left:240px;top:368.65px;font-size:11px;color:#128a20;transform:scaleX(1.018);">конструкции боковых помещений и т.п.,</div>
<div class="t" style="left:240px;top:381.65px;font-size:11px;color:#128a20;transform:scaleX(1.018);">сталь С345</div>
<div class="t" style="left:490px;top:342.65px;font-size:11px;color:#128a20;">т</div>
<div class="t" style="left:643.5625px;top:342.65px;font-size:11px;color:#128a20;">1,00</div>
<div class="t" style="left:888.5625px;top:342.65px;font-size:11px;color:#128a20;">1,00</div>
<div class="t" style="left:1015.6875px;top:342.65px;font-size:11px;color:#128a20;">117 351,83</div>
<div class="t" style="left:1168.5625px;top:342.65px;font-size:11px;color:#128a20;">0,89</div>
<div class="t" style="left:1294.875px;top:342.65px;font-size:11px;color:#128a20;">104 443,13</div>
<svg class="r" style="left:36px;top:401px" width="16" height="16" viewBox="0 0 16 16"><path d="M4.65 4V13.15H15" stroke="#707070" stroke-width="1.3" fill="none"/><rect x="6.2" y="5" width="2" height="6.8" rx="0.8" fill="#d8532e"/><rect x="9" y="4" width="2" height="7.8" rx="0.8" fill="#eba21b"/><rect x="11.8" y="6.8" width="2" height="5" rx="0.8" fill="#168f26"/></svg>
<div class="t" style="left:97.875px;top:405.65px;font-size:11px;color:#212121;">2</div>
<div class="t" style="left:125.6px;top:405.65px;font-size:11px;color:#212121;">11.2.06.02-0047</div>
<svg class="r" style="left:47px;top:433px" width="7" height="11" viewBox="0 0 7 11"><path d="M1.5 1L5.5 5.5L1.5 10" stroke="#5232a8" stroke-width="1.5" fill="none"/></svg>
<div class="t" style="left:119.5px;top:432.15px;font-size:11px;color:#a8a8a8;font-weight:bold;transform:scaleX(1.116);">К</div>
<div class="t" style="left:127px;top:436.85px;font-size:9px;color:#a8a8a8;font-weight:bold;transform:scaleX(1.011);">п</div>
<div class="t" style="left:240px;top:405.65px;font-size:11px;color:#212121;transform:scaleX(1.018);">Балка клееная хвойных пород (ель, сосна),</div>
<div class="t" style="left:240px;top:418.65px;font-size:11px;color:#212121;transform:scaleX(1.018);">размеры 100х100 мм</div>
<div class="t" style="left:490px;top:405.65px;font-size:11px;color:#212121;">м3</div>
<div class="t" style="left:643.5625px;top:405.65px;font-size:11px;color:#212121;">1,00</div>
<div class="t" style="left:888.5625px;top:405.65px;font-size:11px;color:#212121;">1,00</div>
<div class="t" style="left:1021.0px;top:405.65px;font-size:11px;color:#212121;">30 576,66</div>
<div class="t" style="left:1168.5625px;top:405.65px;font-size:11px;color:#212121;">1,02</div>
<div class="t" style="left:1301.0px;top:405.65px;font-size:11px;color:#212121;">31 188,19</div>
<svg class="r" style="left:47px;top:457px" width="7" height="11" viewBox="0 0 7 11"><path d="M1.5 1L5.5 5.5L1.5 10" stroke="#5232a8" stroke-width="1.5" fill="none"/></svg>
<div class="t" style="left:240px;top:456.65px;font-size:11px;color:#212121;">Всего</div>
<div class="r" style="left:1402px;top:194px;width:331px;height:816px;background:#fff;"></div>
<div class="r" style="left:1402px;top:194px;width:1px;height:816px;background:#d1c4e9;"></div>
<div class="r" style="left:1732px;top:194px;width:1px;height:816px;background:#d1c4e9;"></div>
<div class="r" style="left:1403px;top:218px;width:329px;height:1px;background:#d1c4e9;"></div>
<div class="r" style="left:1405px;top:194px;width:326px;height:1px;background:#d1c4e9;"></div>
<div class="t" style="left:1407px;top:200.80px;font-size:12px;color:#111;font-weight:bold;transform:scaleX(0.969);">Расчет</div>
<svg class="r" style="left:1712px;top:198px" width="12" height="19" viewBox="0 0 12 19"><ellipse cx="5.8" cy="2.8" rx="3.1" ry="1.9" fill="#111"/><ellipse cx="5.8" cy="2.3" rx="1.3" ry="0.6" fill="#ddd"/><path d="M3.8 4H7.8L7.3 6.8H4.3Z" fill="#111"/><ellipse cx="5.8" cy="9.4" rx="4.6" ry="2.4" fill="#111"/><path d="M3.6 7.2H8" stroke="#555" stroke-width="0.5"/><rect x="5.25" y="11.8" width="1.1" height="5.8" rx="0.5" fill="#111"/></svg>
<div class="r" style="left:1403px;top:220px;width:328px;height:29px;background:#4527a0;"></div>
<div class="r" style="left:1403px;top:251px;width:328px;height:29px;background:#512da8;box-shadow:0 3px 4px rgba(0,0,0,0.25);"></div>
<svg class="r" style="left:1413px;top:229px" width="7" height="11" viewBox="0 0 7 11"><path d="M1.5 1L5.5 5.5L1.5 10" stroke="#fff" stroke-width="1.5" fill="none"/></svg>
<svg class="r" style="left:1413px;top:260px" width="7" height="11" viewBox="0 0 7 11"><path d="M1.5 1L5.5 5.5L1.5 10" stroke="#fff" stroke-width="1.5" fill="none"/></svg>
<div class="t" style="left:1431px;top:229.65px;font-size:11px;color:#fff;font-weight:bold;transform:scaleX(0.946);">Поправочные коэффициенты</div>
<div class="t" style="left:1431px;top:260.65px;font-size:11px;color:#fff;font-weight:bold;transform:scaleX(0.953);">Состав работ</div>
<div class="r" style="left:1402px;top:190px;width:333px;height:107px;background:transparent;box-sizing:border-box;border:3px solid #f00;"></div>
<div class="r" style="left:1734px;top:195px;width:22px;height:71px;background:#ffecb3;"></div>
<div class="r" style="left:1733px;top:266px;width:23px;height:1px;background:#d1c4e9;"></div>
<div class="r" style="left:1733px;top:357px;width:23px;height:1px;background:#d1c4e9;"></div>
<div class="t" style="left:1739px;top:211px;font-size:12.2px;color:#111;writing-mode:vertical-rl;line-height:14px">Расчет</div>
<div class="t" style="left:1739px;top:283px;font-size:12.2px;color:#111;writing-mode:vertical-rl;line-height:14px">Структура</div>
<div class="r" style="left:34px;top:1003px;width:1368px;height:7px;background:#fff;box-sizing:border-box;border-top:1px solid #d1c4e9;"></div>
<div class="r" style="left:35px;top:1003px;width:1198px;height:6px;background:#a592d2;border-radius:3px;"></div>
<div class="r" style="left:34px;top:1009px;width:1722px;height:1px;background:#d1c4e9;"></div>
<div class="r" style="left:34px;top:1010px;width:157px;height:4px;background:#ff9d00;"></div>
<div class="r" style="left:34px;top:1014px;width:157px;height:26px;background:#ffecb3;"></div>
<svg class="r" style="left:57px;top:1016px" width="20" height="19" viewBox="0 0 20 19"><path d="M1.6 8.5L9.7 1L18 8.3" stroke="#5232a8" stroke-width="1.5" fill="none"/><path d="M3.6 9.2L9.7 4L15.9 9.2M3.6 9.2H15.9M4.3 9V16.2M15.2 9V16.2" fill="none" stroke="#e9b865" stroke-width="1.2"/><path d="M7.6 9.5V16.2M11.8 9.5V16.2M9.7 5V9" stroke="#f0d090" stroke-width="1"/><rect x="1.5" y="16.6" width="16" height="1.2" fill="#777"/></svg>
<div class="t" style="left:82px;top:1017.10px;font-size:14px;color:#1a1a1a;font-weight:bold;transform:scaleX(0.962);">Новая смета</div>
<svg class="r" style="left:174px;top:1020px" width="10" height="10" viewBox="0 0 10 10"><path d="M1 1L9 9M9 1L1 9" stroke="#111" stroke-width="1.6"/></svg>
<div class="r" style="left:1324px;top:1011px;width:1px;height:26px;background:#ddd;"></div>
<div class="t" style="left:1337px;top:1016.45px;font-size:13px;color:#111;font-weight:bold;">Всего</div>
<div class="t" style="left:1393px;top:1017.45px;font-size:13px;color:#222;transform:scaleX(1.032);">164 773,52 ₽</div>
<div id="frame"></div>
</body></html>
